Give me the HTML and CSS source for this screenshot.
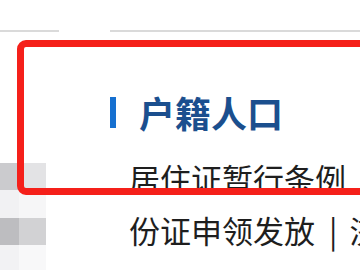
FILE: index.html
```html
<!DOCTYPE html>
<html lang="zh-CN">
<head>
<meta charset="utf-8">
<link rel="stylesheet" href="styles.css">
</head>
<body>
<div class="page">
  <div class="rule"><span class="seg seg-a"></span><span class="seg seg-b"></span></div>
  <div class="main">
    <div class="mosaic">
      <span class="c c1"></span><span class="c c2"></span>
      <span class="c c3"></span><span class="c c4"></span>
      <span class="c c5"></span><span class="c c6"></span>
      <span class="c c7"></span><span class="c c8"></span>
    </div>
    <div class="content">
      <h2 class="title"><span class="bar"></span><span class="title-text">户籍人口</span></h2>
      <p class="line">居住证暂行条例</p>
      <p class="line">份证申领发放<span class="sep">|</span>济南市</p>
    </div>
  </div>
  <div class="highlight"></div>
</div>
</body>
</html>
```
FILE: styles.css
```css
html, body {
  margin: 0;
  padding: 0;
  background: #ffffff;
}
body {
  width: 360px;
  height: 270px;
  overflow: hidden;
  font-family: "Noto Sans CJK SC", "Noto Sans", sans-serif;
}
.page {
  position: relative;
  width: 360px;
  height: 270px;
  overflow: hidden;
}
.rule {
  display: flex;
  margin-top: 30px;
  height: 2px;
}
.seg {
  display: block;
  height: 2px;
  background: #dadada;
}
.seg-a { width: 59px; }
.seg-b { width: 250px; margin-left: 51px; }
.main {
  display: flex;
}
.mosaic {
  width: 46px;
  flex: none;
  padding-top: 131px;
  display: grid;
  grid-template-columns: 19px 27px;
  grid-template-rows: 27px 28px 27px 25px;
}
.c { display: block; }
.c1 { background: #cbcbce; }
.c2 { background: #e3e3e5; }
.c3 { background: #f1f1f3; }
.c4 { background: #f6f6f7; }
.c5 { background: #bdbdc0; }
.c6 { background: #d2d2d4; }
.c7 { background: #f2f2f4; }
.c8 { background: #f8f8f9; }
.content {
  flex: 1;
  min-width: 0;
}
.title {
  margin: 60px 0 0 64px;
  display: flex;
  align-items: center;
  height: 40px;
  font-size: 36px;
  line-height: 40px;
  font-weight: 700;
  color: #1b4f8e;
}
.bar {
  display: block;
  width: 6px;
  height: 31px;
  background: #1670d0;
  margin-right: 23px;
}
.line {
  margin: 0 0 0 83px;
  font-size: 31px;
  line-height: 52px;
  color: #1e1e1e;
  white-space: nowrap;
}
.title + .line {
  margin-top: 20px;
}
.sep {
  margin: 0 12px 0 14px;
}
.highlight {
  position: absolute;
  left: 17px;
  top: 40px;
  width: 380px;
  height: 155px;
  box-sizing: border-box;
  border: 7px solid #f5201a;
  border-radius: 9px;
}
```
